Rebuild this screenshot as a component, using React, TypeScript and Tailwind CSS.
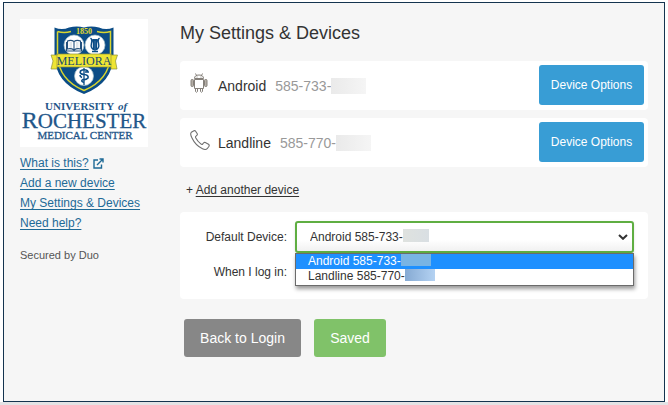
import type { ReactNode } from "react";

function Logo() {
  return (
    <svg viewBox="0 0 128 128" className="block h-32 w-32 bg-white" role="img" aria-label="University of Rochester Medical Center">
      <path d="M34.500 8.500Q42 11.500 49 8.500Q57 6.500 64 8.500Q71 6.500 79 8.500Q86 11.500 93.500 8.500V36Q93 64 64 75Q35 64 34.500 36Z" fill="#0b4c86" />
      <path d="M37.500 12.500Q44 14.500 51 12.500M77 12.500Q84 14.500 90.500 12.500V37Q89 61 64 71.500Q39 61 37.500 37V12.500" fill="none" stroke="#d9d52f" strokeWidth="1.500" />
      <text x="64" y="15" fontSize="8" fontWeight="700" textAnchor="middle" fontFamily="'Liberation Serif', serif" fill="#e6dc2c">1850</text>
      <g fill="#fff" stroke="#a9c2c8" strokeWidth="0.700">
        <circle cx="54" cy="26" r="10" />
        <circle cx="75" cy="26" r="10" />
        <circle cx="64" cy="57" r="9.500" />
      </g>
      <path d="M54 22.500Q51 20.500 47.500 22V30Q51 29 54 31Q57 29 60.500 30V22Q57 20.500 54 22.500ZM54 22.500V31M46.500 23V32H61.500V23" fill="#fff" stroke="#24517d" strokeWidth="1.100" />
      <path d="M49.500 24h2.500M49.500 26h2.500M49.500 28h2.500M56 24h2.500M56 26h2.500M56 28h2.500" stroke="#9aafbf" strokeWidth="0.600" />
      <path d="M70.500 19Q73 21 71.500 24Q70 30 75 31Q80 30 78.500 24Q77 21 79.500 19M73.500 20V30M75 20V30M76.500 20V30M71 21H79" fill="none" stroke="#0b4c86" strokeWidth="1.400" />
      <path d="M72 32.500H78" stroke="#0b4c86" strokeWidth="1.500" />
      <path d="M31 36H37V35H91V36H97.500L95.500 42L97 50H91V48H37V50H31L33 42Z" fill="#efe534" stroke="#8c913b" strokeWidth="0.700" />
      <path d="M37 35V48M91 35V48" stroke="#a6a22d" strokeWidth="0.800" />
      <text x="64" y="46" fontSize="12" textAnchor="middle" fontFamily="'Liberation Serif', serif" fill="#174a6c">MELIORA</text>
      <path d="M64 49V66" stroke="#0b4c86" strokeWidth="1.300" />
      <path d="M68 52Q64 49.500 60.500 52Q59 55 64 55.500Q69 56 68 59Q66 61 63 60.500Q60 62 64 63.500M60 56Q60 58 62 58.500M65 53H69" fill="none" stroke="#0b4c86" strokeWidth="1.600" />
      <g fontFamily="'Liberation Serif', serif" fill="#1f5689">
        <text x="25" y="91" fontSize="11" fontWeight="700">UNIVERSITY</text>
        <text x="98" y="91" fontSize="11" fontWeight="700" fontStyle="italic">of</text>
        <text x="64" y="109" fontSize="21" textAnchor="middle" stroke="#1f5689" strokeWidth="0.300"><tspan fontSize="24">R</tspan>OCHESTER</text>
        <text x="65" y="120" fontSize="11" textAnchor="middle" stroke="#1f5689" strokeWidth="0.300">MEDICAL CENTER</text>
      </g>
    </svg>
  );
}

function AndroidIcon() {
  return (
    <svg viewBox="0 0 18 20" className="h-5 w-[18px]" fill="none" stroke="#85807a" strokeWidth="1" aria-hidden="true">
      <path d="M4.500 5.500Q4.500 2 9 2Q13.500 2 13.500 5.500ZM5.500 .5L6.500 2.500M12.500 .5L11.500 2.500M4.500 6.500H13.500V15.500H4.500Z" />
      <path d="M5.500 15.500V18.500Q6.500 20 7.500 18.500V15.500M10.500 15.500V18.500Q11.500 20 12.500 18.500V15.500" />
      <rect x="1" y="6.500" width="2.500" height="7" rx="1" fill="#b4aea6" />
      <rect x="14.500" y="6.500" width="2.500" height="7" rx="1" fill="#b4aea6" />
      <path d="M7 3.500V4.500M11 3.500V4.500" />
    </svg>
  );
}

function PhoneIcon() {
  return (
    <svg viewBox="0 0 20 20" className="h-5 w-5" fill="none" stroke="#6f6f6f" strokeWidth="1.100" strokeLinejoin="round" aria-hidden="true">
      <path d="M4 .8L1.300 2.300Q-.2 4 2 8Q5.500 15.500 12.500 18.700Q15.500 20.200 17.200 18.700L19 16.200Q19.600 15.200 18.500 14.300L15.300 12.600Q14.300 12.100 13.500 13L12.600 14.200Q11.800 14.700 10.800 13.900Q7.500 11.300 5.700 7.700Q5.300 6.800 6 6.200L7 5.200Q7.700 4.400 7.100 3.500L5.600 1.200Q5 .3 4 .8Z" />
    </svg>
  );
}

function Device({ icon, name, number }: { icon: ReactNode; name: string; number: string }) {
  return (
    <li className="flex items-center rounded-sm bg-white pt-1 pr-1 pb-[5px] pl-2.5">
      <span className="mb-1 flex w-7 shrink-0">{icon}</span>
      <span className="pt-0.5 text-sm text-[#333]">{name}</span>
      <span className="ml-[9px] pt-0.5 text-sm text-[#999]">{number}</span>
      <span className="mt-0.5 h-4 w-[35px] bg-linear-to-r from-[#eaeaea] to-[#f5f5f5]" />
      <button type="button" className="ml-auto h-10 w-[105px] rounded-[3px] bg-[#389dd5] text-xs text-white">
        Device Options
      </button>
    </li>
  );
}

const sideLink = "w-fit text-xs leading-5 text-[#1e6a96] underline underline-offset-2";

export default function App() {
  return (
    <div className="min-h-screen bg-[#e3e3e5] font-['Liberation_Sans',Arial,sans-serif]">
      <div className="bg-white px-[3px] pt-0.5">
        <div className="flex min-h-[400px] border border-[#14344f] bg-[#f6f6f6] pr-4 pl-4">
          <aside className="w-40 shrink-0 pt-4">
            <Logo />
            <nav className="flex flex-col pt-1.5">
              <div className="flex items-center gap-1">
                <a href="#what" className={sideLink}>What is this?</a>
                <svg viewBox="0 0 11 11" className="h-[11px] w-[11px]" fill="none" stroke="#1e6a96" strokeWidth="1.400" aria-hidden="true">
                  <path d="M5 2H1V10H8.500V6.500M4 7L9.500 1.500M6.500 1H10V4.500" />
                </svg>
              </div>
              <a href="#add" className={sideLink}>Add a new device</a>
              <a href="#settings" className={sideLink}>My Settings &amp; Devices</a>
              <a href="#help" className={sideLink}>Need help?</a>
            </nav>
            <p className="pt-3.5 text-[11px] leading-4 text-[#555]">Secured by Duo</p>
          </aside>

          <main className="min-w-0 flex-1 pt-4">
            <h1 className="text-lg leading-7 text-[#333]">My Settings &amp; Devices</h1>
            <ul className="flex flex-col gap-2 pt-3.5">
              <Device icon={<AndroidIcon />} name="Android" number="585-733-" />
              <Device icon={<PhoneIcon />} name="Landline" number="585-770-" />
            </ul>
            <p className="pt-[15px] pl-1.5 text-xs leading-4 text-[#333]">
              + <a href="#another" className="underline underline-offset-2">Add another device</a>
            </p>

            <form className="mt-3.5 grid grid-cols-[107px_1fr] gap-x-2 rounded-sm bg-white pt-[9px] pr-3.5 pb-3.5 text-xs text-[#333]">
              <label htmlFor="device" className="self-center text-right">Default Device:</label>
              <div className="relative">
                <select id="device" className="block h-8 w-full appearance-none rounded-[3px] border-2 border-[#5fae42] bg-linear-to-b from-white from-60% to-[#f1f1f1] px-[13px] text-xs shadow-sm">
                  <option>Android 585-733-</option>
                </select>
                <span className="absolute top-2 left-[108px] h-[13px] w-[26px] bg-linear-to-r from-[#dfe2df] to-[#d9dfe3]" />
                <svg viewBox="0 0 10 6" className="pointer-events-none absolute top-[13px] right-1.5 h-1.5 w-2.5" fill="none" stroke="#333" strokeWidth="2" aria-hidden="true">
                  <path d="M1 1L5 4.800L9 1" />
                </svg>
                <ul role="listbox" aria-label="Default Device" className="absolute top-8 left-0 z-10 w-full border border-[#6b6b6b] bg-white leading-[14px] shadow-[1px_3px_4px_#0006]">
                  <li role="option" aria-selected="true" className="flex items-start bg-[#1e90ff] pb-px pl-3 text-white">
                    Android 585-733-
                    <span className="h-3 w-[30px] bg-[#78b4e4]" />
                  </li>
                  <li role="option" aria-selected="false" className="flex items-start pb-0.5 pl-3">
                    Landline 585-770-
                    <span className="h-3 w-[30px] bg-linear-to-r from-[#86aad3] to-[#b4d2f2]" />
                  </li>
                </ul>
              </div>
              <label htmlFor="login" className="mt-1.5 self-center text-right">When I log in:</label>
              <select id="login" className="mt-2 h-6 w-full appearance-none bg-white" />
            </form>

            <div className="flex gap-[13px] pt-5 pl-1">
              <button type="button" className="h-[38px] w-[117px] rounded-[3px] bg-[#878787] text-sm text-white">Back to Login</button>
              <button type="button" className="h-[38px] w-[72px] rounded-[3px] bg-[#80c269] text-sm text-white">Saved</button>
            </div>
          </main>
        </div>
      </div>
    </div>
  );
}
